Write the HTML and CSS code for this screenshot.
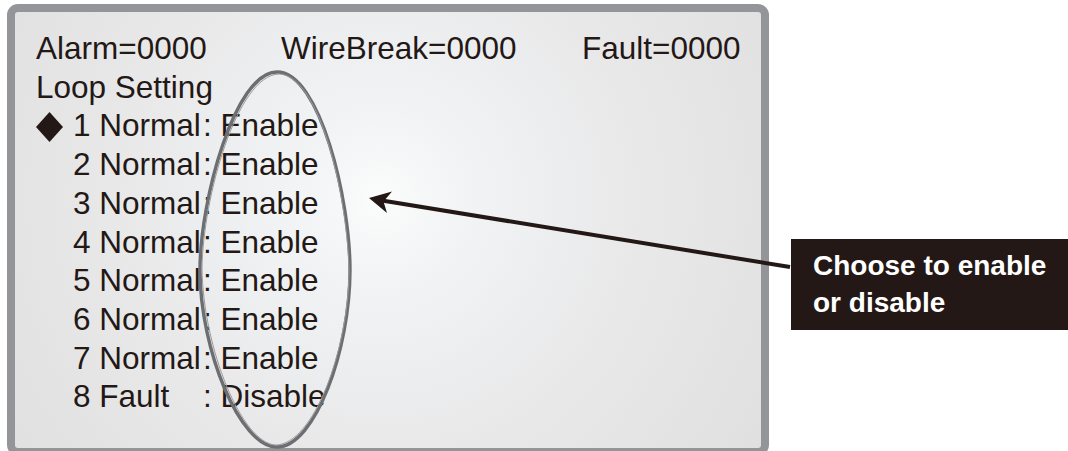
FILE: index.html
```html
<!DOCTYPE html>
<html lang="en">
<head>
    <meta charset="UTF-8" />
    <meta name="viewport" content="width=device-width, initial-scale=1.0" />
    <title>Loop Setting</title>
    <link rel="stylesheet" href="styles.css">
</head>
<body>
    <div class="stage">
        <div class="lcd-panel">
            <div class="status-row">
                <span>Alarm=0000</span>
                <span>WireBreak=0000</span>
                <span>Fault=0000</span>
            </div>
            <div class="menu-title">Loop Setting</div>
            <div class="loop-list">
                <div class="loop-row">
                    <span class="marker">
                        <svg width="27" height="30" viewBox="0 0 27 30"><polygon points="13.5,0 27,15 13.5,30 0,15" fill="#231815"/></svg>
                    </span>
                    <span class="loop-name">1 Normal</span>
                    <span class="loop-state">: Enable</span>
                </div>
                <div class="loop-row">
                    <span class="marker"></span>
                    <span class="loop-name">2 Normal</span>
                    <span class="loop-state">: Enable</span>
                </div>
                <div class="loop-row">
                    <span class="marker"></span>
                    <span class="loop-name">3 Normal</span>
                    <span class="loop-state">: Enable</span>
                </div>
                <div class="loop-row">
                    <span class="marker"></span>
                    <span class="loop-name">4 Normal</span>
                    <span class="loop-state">: Enable</span>
                </div>
                <div class="loop-row">
                    <span class="marker"></span>
                    <span class="loop-name">5 Normal</span>
                    <span class="loop-state">: Enable</span>
                </div>
                <div class="loop-row">
                    <span class="marker"></span>
                    <span class="loop-name">6 Normal</span>
                    <span class="loop-state">: Enable</span>
                </div>
                <div class="loop-row">
                    <span class="marker"></span>
                    <span class="loop-name">7 Normal</span>
                    <span class="loop-state">: Enable</span>
                </div>
                <div class="loop-row">
                    <span class="marker"></span>
                    <span class="loop-name">8 Fault</span>
                    <span class="loop-state">: Disable</span>
                </div>
            </div>
        </div>

        <div class="callout">Choose to enable or disable</div>
    </div>

    <!-- hand-drawn annotation: ring around the states and pointer arrow -->
    <svg class="annotation" width="1068" height="451" viewBox="0 0 1068 451">
        <path d="M277,72 C320,72 350,200 350,270 C350,350 315,447 277,447 C240,447 200,350 200,270 C200,200 235,72 277,72 Z"
              fill="none" stroke="#6d6e71" stroke-width="3.4"/>
        <path d="M279,74 C322,76 348,204 349,272 C348,352 313,444 276,445 C242,444 203,348 202,268 C203,198 237,75 279,74 Z"
              fill="none" stroke="#9a9b9d" stroke-width="1"/>
        <line x1="790" y1="267" x2="382" y2="200.5" stroke="#231815" stroke-width="4"/>
        <polygon points="369,198 392,191.5 383.5,201.5 387,213" fill="#231815"/>
    </svg>
</body>
</html>
```

FILE: styles.css
```css
body {
    margin: 0;
    position: relative;
    width: 1068px;
    height: 451px;
    overflow: hidden;
    background-color: #fff;
    font-family: "Liberation Sans", Arial, sans-serif;
    color: #231815;
}

.stage {
    display: flex;
    align-items: flex-start;
    padding: 4px 0 0 7px;
}

.lcd-panel {
    box-sizing: border-box;
    width: 762px;
    height: 452px;
    flex-shrink: 0;
    border: 8px solid #939598;
    border-radius: 11px;
    padding: 17px 20px 0 21px;
    background: radial-gradient(circle at 49% 43%, #fbfcfc 0, #f1f3f4 90px, #e9e9ea 250px, #e1e0e1 450px, #dcdbdc 700px);
    font-size: 31.5px;
    line-height: 38.7px;
}

.status-row {
    display: grid;
    grid-template-columns: 245px 301px auto;
}

.loop-row {
    display: grid;
    grid-template-columns: 37px 130px auto;
    align-items: center;
}

.marker {
    display: flex;
    align-items: center;
    height: 38.7px;
    padding-top: 2px;
    box-sizing: border-box;
}

.loop-name,
.loop-state {
    white-space: pre;
}

.callout {
    box-sizing: border-box;
    width: 277px;
    margin: 235px 0 0 22px;
    padding: 8px 10px 9px 22px;
    background-color: #231815;
    color: #fff;
    font-weight: bold;
    font-size: 28px;
    line-height: 37px;
}

.annotation {
    position: absolute;
    top: 0;
    left: 0;
    pointer-events: none;
}
```
